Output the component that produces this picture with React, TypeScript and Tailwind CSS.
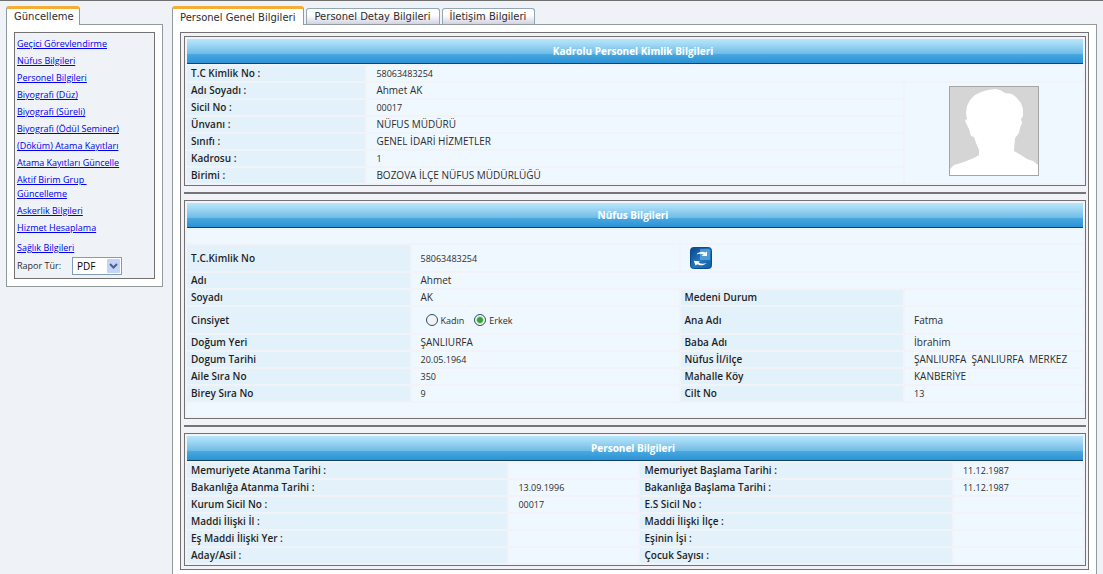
import React, { useState } from 'react';
import clsx from 'clsx';

type Field = [label: string, value: string];

const menuLinks = [
  'Geçici Görevlendirme',
  'Nüfus Bilgileri',
  'Personel Bilgileri',
  'Biyografi (Düz)',
  'Biyografi (Süreli)',
  'Biyografi (Ödül Seminer)',
  '(Döküm) Atama Kayıtları',
  'Atama Kayıtları Güncelle',
  'Aktif Birim Grup \nGüncelleme',
  'Askerlik Bilgileri',
  'Hizmet Hesaplama',
];

const tabs = ['Personel Genel Bilgileri', 'Personel Detay Bilgileri', 'İletişim Bilgileri'];

const identityFields: Field[] = [
  ['Adı Soyadı :', 'Ahmet AK'],
  ['Sicil No :', '00017'],
  ['Ünvanı :', 'NÜFUS MÜDÜRÜ'],
  ['Sınıfı :', 'GENEL İDARİ HİZMETLER'],
  ['Kadrosu :', '1'],
  ['Birimi :', 'BOZOVA İLÇE NÜFUS MÜDÜRLÜĞÜ'],
];

const birthRows: [Field, Field][] = [
  [['Doğum Yeri', 'ŞANLIURFA'], ['Baba Adı', 'İbrahim']],
  [['Dogum Tarihi', '20.05.1964'], ['Nüfus İl/ilçe', 'ŞANLIURFA  ŞANLIURFA  MERKEZ']],
  [['Aile Sıra No', '350'], ['Mahalle Köy', 'KANBERİYE']],
  [['Birey Sıra No', '9'], ['Cilt No', '13']],
];

const staffRows: [Field, Field][] = [
  [['Memuriyete Atanma Tarihi :', ''], ['Memuriyet Başlama Tarihi :', '11.12.1987']],
  [['Bakanlığa Atanma Tarihi :', '13.09.1996'], ['Bakanlığa Başlama Tarihi :', '11.12.1987']],
  [['Kurum Sicil No :', '00017'], ['E.S Sicil No :', '']],
  [['Maddi İlişki İl :', ''], ['Maddi İlişki İlçe :', '']],
  [['Eş Maddi İlişki Yer :', ''], ['Eşinin İşi :', '']],
  [['Aday/Asil :', ''], ['Çocuk Sayısı :', '']],
];

const Label = ({ children }: { children: React.ReactNode }) => (
  <th scope="row" className="bg-[#e3f1fb] p-0 pl-1 text-left font-semibold whitespace-nowrap text-[#1f1f1f]">
    {children}
  </th>
);

const Value = ({ children, span }: { children?: React.ReactNode; span?: number }) => {
  // numbers and dates are set one size smaller than names
  const numeric = typeof children === 'string' && /^[\d.]+$/.test(children);

  return (
    <td colSpan={span} className={clsx('bg-[#eff7ff] p-0 pl-[9px] whitespace-pre', numeric && 'text-[9px]')}>
      {children}
    </td>
  );
};

const PairRow = ({ left, right }: { left: Field; right: Field }) => (
  <tr className="h-[15px]">
    <Label>{left[0]}</Label>
    <Value>{left[1]}</Value>
    <Label>{right[0]}</Label>
    <Value>{right[1]}</Value>
  </tr>
);

interface SectionProps {
  title: string;
  widths: string[];
  children: React.ReactNode;
}

const Section: React.FC<SectionProps> = ({ title, widths, children }) => (
  <section className="border border-[#727272]">
    <table className="w-full table-fixed border-separate border-spacing-[2px] leading-[15px]">
      <colgroup>
        {widths.map((width, i) => (
          <col key={i} className={width} />
        ))}
      </colgroup>
      <thead>
        <tr>
          <th
            colSpan={widths.length}
            className="h-[25px] border-b border-[#0f4468] bg-linear-[to_bottom,#b6e6fa_0%,#a3daf5_20%,#6fbbe6_62%,#48a8e0_64%,#2b92d4_100%] p-0 pr-1 font-bold text-white"
          >
            {title}
          </th>
        </tr>
      </thead>
      <tbody>{children}</tbody>
    </table>
  </section>
);

const Divider = () => <hr className="my-[6px] h-[2px] border-0 bg-[#757575]" />;

const Avatar = () => (
  <svg viewBox="0 0 88 88" role="img" aria-label="Personel fotoğrafı" className="mx-auto size-[90px] border border-[#a5a5a5] bg-[#d5d5d5]">
    <path
      fill="#fff"
      d="M0 88V82L4 78L14 75L24 71L29 68L29 63L26 56L24 50L21 49L19 42L16 36L15 33L17 32L16 26L17 19L20 13L25 8L31 5L38 3L45 2L50 3L55 6L62 7L66 10L71 16L73 22L73 29L71 32L72 36L70 41L69 46L65 51L64 64L71 68L77 72L83 74L88 78V88Z"
    />
  </svg>
);

const RefreshIcon = () => (
  <svg viewBox="0 0 22 22" className="size-[22px]">
    <defs>
      <linearGradient id="refreshBg" x1="0" y1="0" x2="1" y2="1">
        <stop offset="0" stopColor="#07458c" />
        <stop offset="0.55" stopColor="#2677bd" />
        <stop offset="1" stopColor="#0f5ca6" />
      </linearGradient>
    </defs>
    <rect x="0.5" y="0.5" width="21" height="21" rx="3" fill="url(#refreshBg)" stroke="#0a4c92" />
    <path d="M10 2H18Q20 2 20 4V13H10Z" fill="#6db6e4" opacity="0.6" />
    <path d="M6.500 7.500C8.500 4.500 13 4 15.500 5.500L17 4.500V9H11.500L13.500 7.500C11 6.300 8.500 6.500 6.500 7.500Z" fill="#fff" />
    <path d="M16.500 16C14 18.800 9.500 18.900 7.300 17.300L5.500 18.500L3.800 13.700L10 14.500L8.500 15.800C11.500 17 14 16.900 16.500 16Z" fill="#fff" />
  </svg>
);

const radioClass =
  'size-3 appearance-none rounded-full border border-[#24507c] bg-[#f4f3ee] checked:bg-radial checked:from-[#2fa82f] checked:from-35% checked:to-[#f4f3ee] checked:to-55%';

const activeTabClass = 'border-t-[3px] border-t-[#f5ad33] bg-white h-[19px]';

function App() {
  const [activeTab, setActiveTab] = useState(tabs[0]);
  const [gender, setGender] = useState('Erkek');

  return (
    <div className="flex min-h-screen items-stretch gap-[9px] border-t border-[#6f6f6f] bg-[#eff3f8] px-[6px] pt-[5px] font-['Open_Sans','Noto_Sans',sans-serif] text-[10px] text-[#2d2d2d]">
      {/* Left menu */}
      <aside className="w-[157px] shrink-0">
        <h2
          className={clsx(
            activeTabClass,
            "relative -mb-px w-fit rounded-t-[3px] border-x border-x-[#919b9c] pr-[5px] pl-[7px] font-['DejaVu_Sans',sans-serif] leading-[15px]",
          )}
        >
          Güncelleme
        </h2>
        <div className="border border-[#919b9c] bg-white p-[7px]">
          <nav className="border border-[#727272] bg-[#eff3f8] px-[2px] pt-1 pb-[3px] text-[9px] leading-[14px]">
            <ul className="flex flex-col gap-[3px]">
              {menuLinks.map(link => (
                <li key={link}>
                  <a href="#" className="block w-fit whitespace-pre text-[#0000ee] underline">
                    {link}
                  </a>
                </li>
              ))}
              <li className="pt-[3px]">
                <a href="#" className="block w-fit text-[#0000ee] underline">
                  Sağlık Bilgileri
                </a>
              </li>
            </ul>
            <div className="mt-[2px] flex items-center gap-[11px]">
              <label htmlFor="report">Rapor Tür:</label>
              <div className="relative">
                <select
                  id="report"
                  className="block h-[18px] w-[50px] appearance-none border border-[#7f9db9] bg-white pl-1 text-[10px] leading-[14px] text-black"
                >
                  <option>PDF</option>
                  <option>XLS</option>
                </select>
                <svg viewBox="0 0 13 14" className="pointer-events-none absolute top-[2px] right-[2px] h-[14px] w-[13px]">
                  <rect width="13" height="14" rx="1" fill="#c3d3fb" />
                  <path d="M3 5L6.500 8.500L10 5" fill="none" stroke="#4d6185" strokeWidth="2" />
                </svg>
              </div>
            </div>
          </nav>
        </div>
      </aside>

      {/* Personnel record */}
      <main className="flex min-w-0 flex-1 flex-col">
        <div role="tablist" className="relative -mb-px flex h-[19px] items-end gap-[2px] font-['DejaVu_Sans',sans-serif]">
          {tabs.map(tab => (
            <button
              key={tab}
              role="tab"
              aria-selected={tab === activeTab}
              onClick={() => setActiveTab(tab)}
              className={clsx(
                'rounded-t-[3px] border-x pr-2 pl-[7px] leading-[15px]',
                tab === activeTab
                  ? [activeTabClass, 'border-x-[#919b9c]']
                  : 'h-[17px] border-y border-[#91a7b4] border-b-[#919b9c] bg-linear-to-b from-white from-40% to-[#d2d2e4]',
              )}
            >
              {tab}
            </button>
          ))}
        </div>
        <div className="flex-1 border border-b-0 border-[#919b9c] bg-white p-[7px] pb-[5px]">
          <div className="border border-[#727272] bg-[#f1f3f9] pt-[3px] pr-[2px] pb-[3px] pl-[3px]">
            <Section title="Kadrolu Personel Kimlik Bilgileri" widths={['w-[20%]', 'w-[60%]', 'w-[20%]']}>
              <tr className="h-[15px]">
                <Label>T.C Kimlik No :</Label>
                <Value span={2}>58063483254</Value>
              </tr>
              {identityFields.map(([label, value], i) => (
                <tr key={label} className="h-[15px]">
                  <Label>{label}</Label>
                  <Value>{value}</Value>
                  {i === 0 && (
                    <td rowSpan={identityFields.length} className="bg-[#eff7ff] p-0 pt-[3px] align-top">
                      <Avatar />
                    </td>
                  )}
                </tr>
              ))}
            </Section>

            <Divider />

            <Section title="Nüfus Bilgileri" widths={['w-[25%]', 'w-[30%]', 'w-[25%]', 'w-[20%]']}>
              <tr className="h-[13px]">
                <Value span={4} />
              </tr>
              <tr className="h-[26px]">
                <Label>T.C.Kimlik No</Label>
                <Value>58063483254</Value>
                <Value span={2}>
                  <button aria-label="Yenile" className="block">
                    <RefreshIcon />
                  </button>
                </Value>
              </tr>
              <tr className="h-[15px]">
                <Label>Adı</Label>
                <Value span={3}>Ahmet</Value>
              </tr>
              <PairRow left={['Soyadı', 'AK']} right={['Medeni Durum', '']} />
              <tr className="h-[26px]">
                <Label>Cinsiyet</Label>
                <Value>
                  <div className="flex gap-[10px] pl-[5px] text-[9px]">
                    {['Kadın', 'Erkek'].map(option => (
                      <label key={option} className="flex items-center gap-[3px]">
                        <input
                          type="radio"
                          name="gender"
                          checked={gender === option}
                          onChange={() => setGender(option)}
                          className={radioClass}
                        />
                        {option}
                      </label>
                    ))}
                  </div>
                </Value>
                <Label>Ana Adı</Label>
                <Value>Fatma</Value>
              </tr>
              {birthRows.map(([left, right]) => (
                <PairRow key={left[0]} left={left} right={right} />
              ))}
              <tr className="h-[13px]">
                <Value span={4} />
              </tr>
            </Section>

            <Divider />

            <Section title="Personel Bilgileri" widths={['w-[36%]', 'w-auto', 'w-[35%]', 'w-auto']}>
              {staffRows.map(([left, right]) => (
                <PairRow key={left[0]} left={left} right={right} />
              ))}
            </Section>
          </div>
        </div>
      </main>
    </div>
  );
}

export default App;
